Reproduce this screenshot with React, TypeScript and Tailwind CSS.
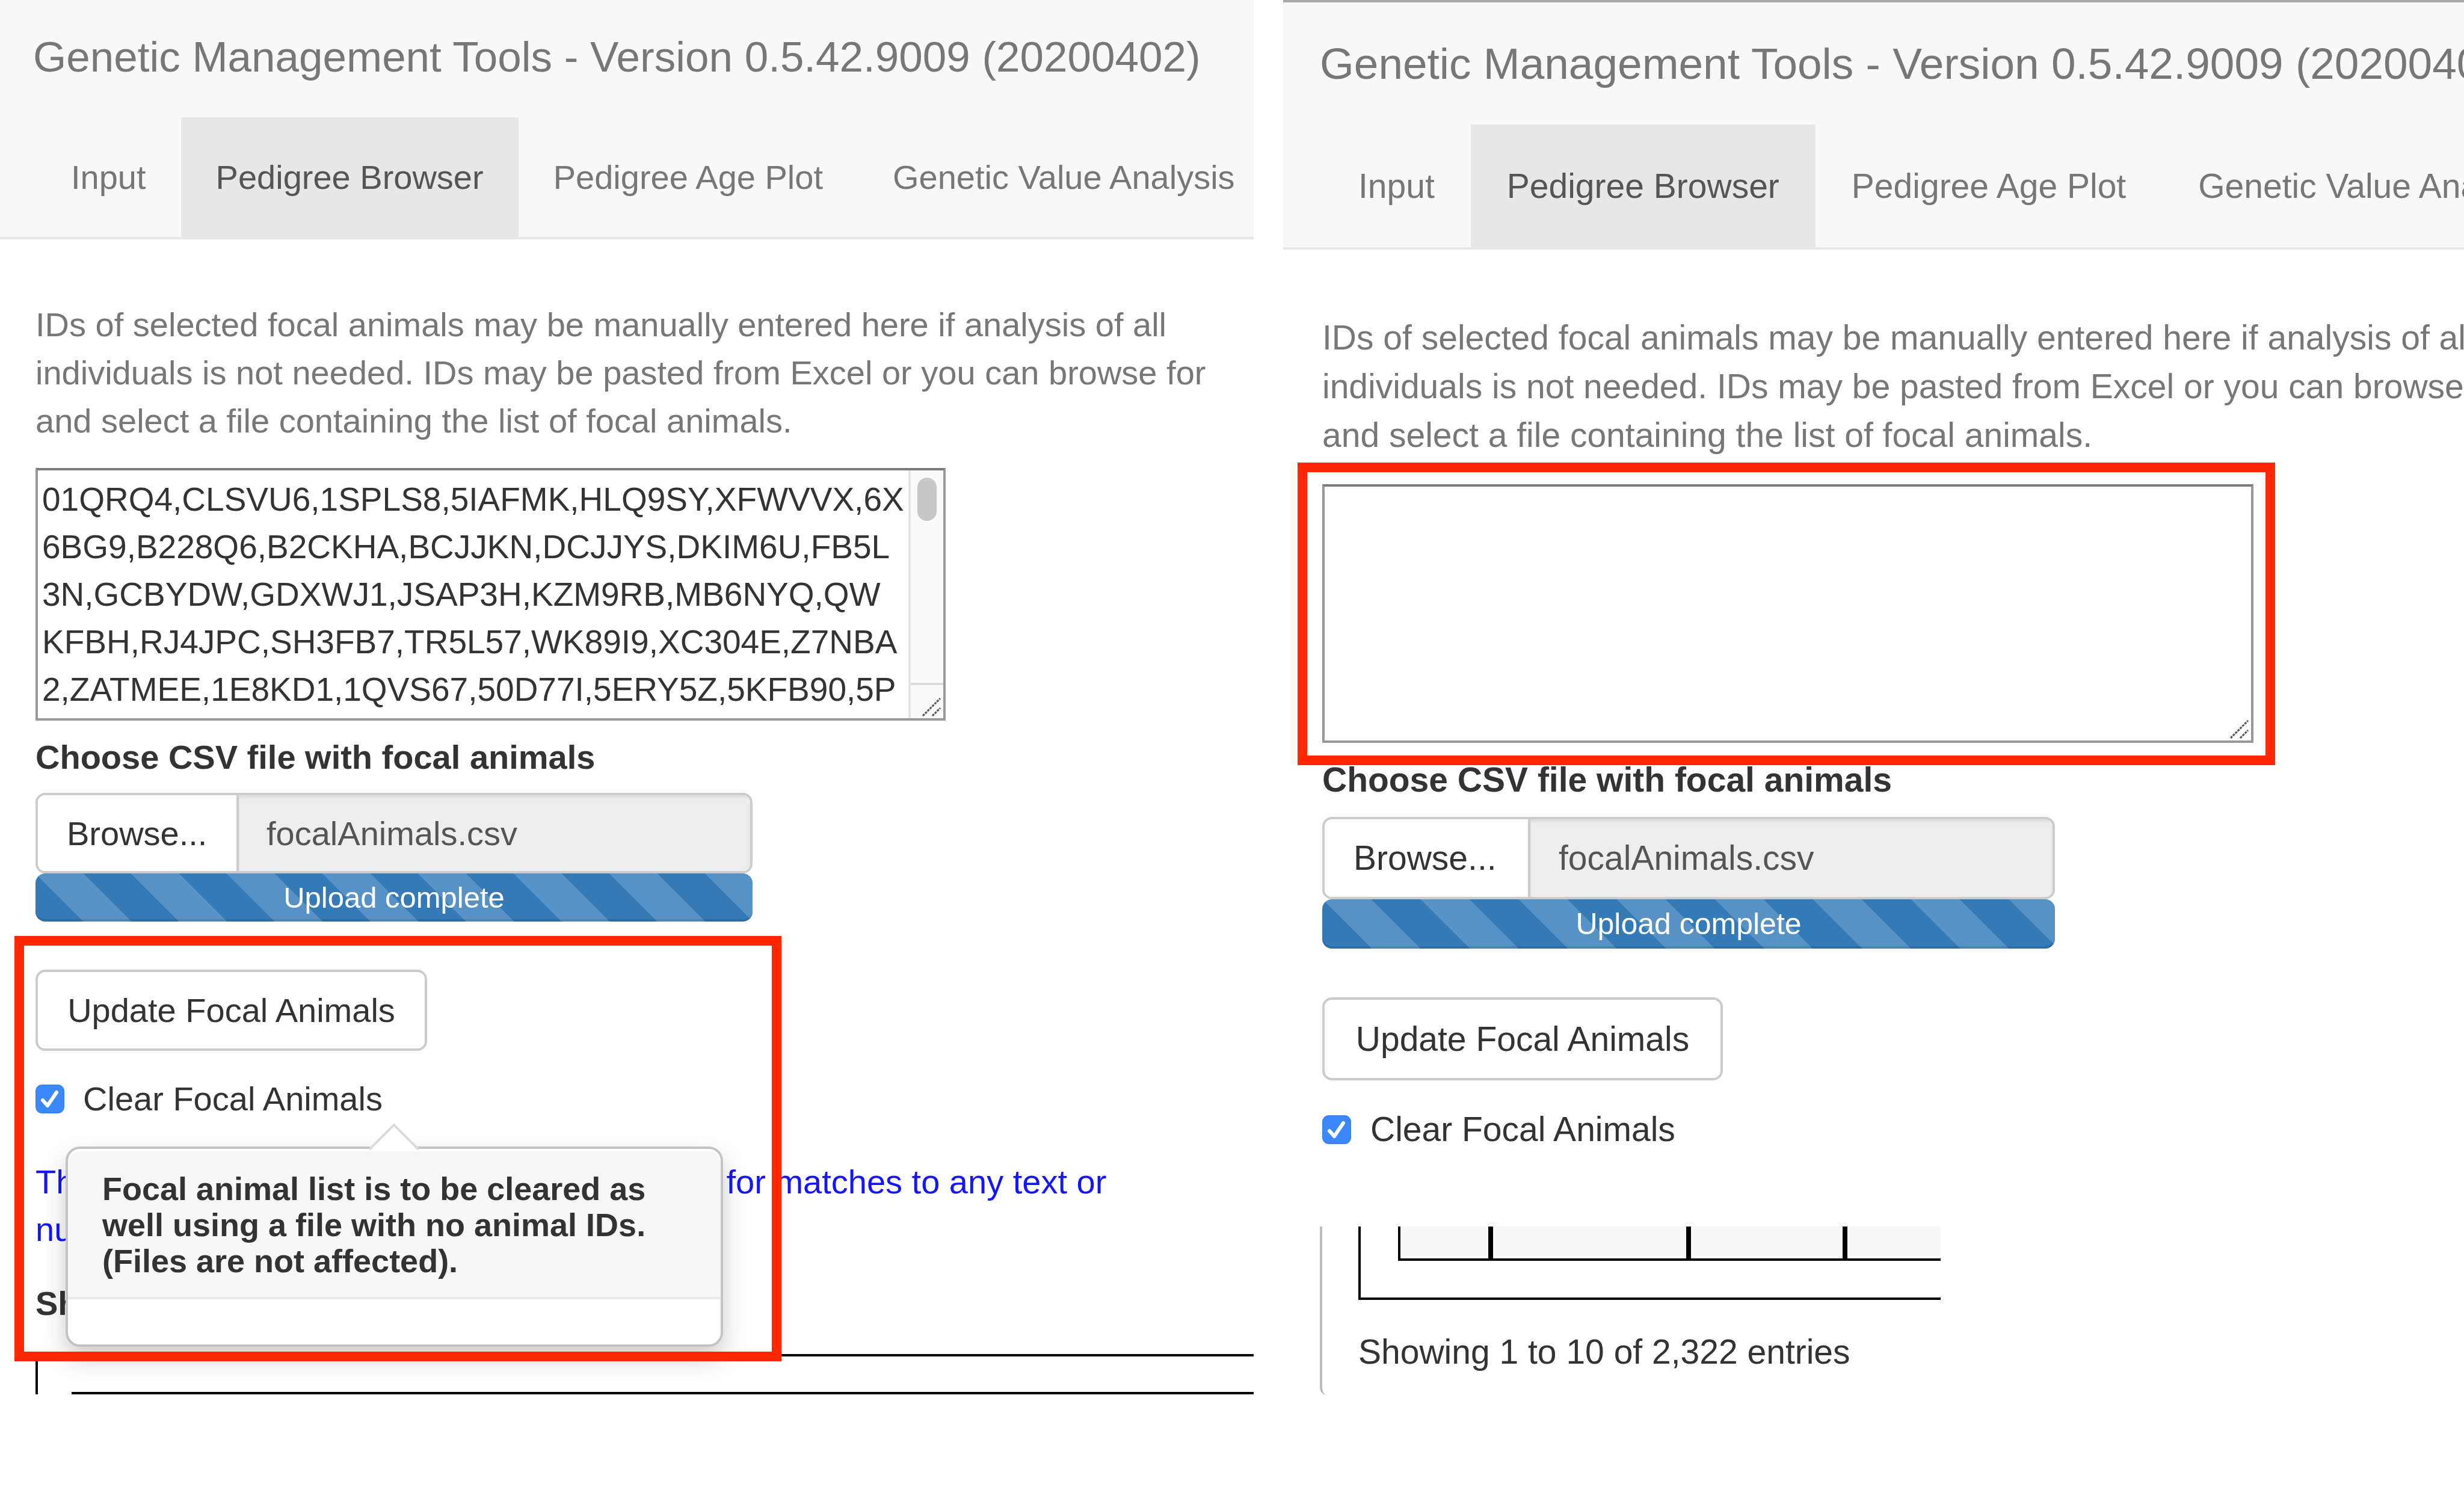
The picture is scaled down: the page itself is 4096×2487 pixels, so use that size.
import { useState } from "react";

const FOCAL_IDS = [
  "01QRQ4,CLSVU6,1SPLS8,5IAFMK,HLQ9SY,XFWVVX,6X",
  "6BG9,B228Q6,B2CKHA,BCJJKN,DCJJYS,DKIM6U,FB5L",
  "3N,GCBYDW,GDXWJ1,JSAP3H,KZM9RB,MB6NYQ,QW",
  "KFBH,RJ4JPC,SH3FB7,TR5L57,WK89I9,XC304E,Z7NBA",
  "2,ZATMEE,1E8KD1,1QVS67,50D77I,5ERY5Z,5KFB90,5P",
].join("\n");

const TABS = ["Input", "Pedigree Browser", "Pedigree Age Plot", "Genetic Value Analysis"];

const normal = {
  header: "bg-[#f8f8f8] border-b-4 border-[#e7e7e7]",
  brand: "pl-[55px] pt-[55px] pb-[60px] text-[71px] leading-[80px]",
  nav: "pl-[60px]",
  tab: "px-[58px] py-[60px] text-[56px] leading-[79px]",
  body: "pl-[59px] text-[56px] leading-[79px]",
  help: "pt-[102px] leading-[80px]",
  areaBox: "mt-[38px] w-[1513px] h-[420px]",
  label: "mt-[21px]",
  group: "mt-[20px] w-[1192px] h-[134px]",
  browse: "w-[334px] pl-[48px]",
  fileName: "pl-[46px]",
  progress: "w-[1192px] h-[80px] leading-[80px] text-[49px] bg-[length:159px_159px]",
  button: "mt-[80px] w-[651px] h-[135px]",
  check: "mt-[40px] gap-[31px]",
};

const large: typeof normal = {
  header: "bg-[#f8f8f8] border-t-4 border-b-4 border-t-[#a9a9a9] border-b-[#e7e7e7]",
  brand: "pl-[61px] pt-[61px] pb-[61px] text-[73px] leading-[81px]",
  nav: "pl-[65px]",
  tab: "px-[60px] py-[61px] text-[57px] leading-[82px]",
  body: "pl-[65px] text-[57px] leading-[81px]",
  help: "pt-[106px] leading-[81px]",
  areaBox: "mt-[41px] w-[1548px] h-[430px]",
  label: "mt-[21px]",
  group: "mt-[21px] w-[1218px] h-[137px]",
  browse: "w-[342px] pl-[48px]",
  fileName: "pl-[47px]",
  progress: "w-[1218px] h-[82px] leading-[82px] text-[50px] bg-[length:163px_163px]",
  button: "mt-[81px] w-[666px] h-[138px]",
  check: "mt-[41px] gap-[32px]",
};

type Size = typeof normal;

function Header({ s }: { s: Size }) {
  return (
    <header className={s.header}>
      <div className={`${s.brand} text-[#777]`}>Genetic Management Tools - Version 0.5.42.9009 (20200402)</div>
      <nav className={`${s.nav} flex`}>
        {TABS.map((t) => (
          <a
            key={t}
            href="#"
            className={`${s.tab} shrink-0 ${t === "Pedigree Browser" ? "bg-[#e7e7e7] text-[#555]" : "text-[#777]"}`}
          >
            {t}
          </a>
        ))}
      </nav>
    </header>
  );
}

function Grip() {
  return (
    <svg className="absolute right-[3px] bottom-[3px] size-[32px]" viewBox="0 0 32 32" aria-hidden="true">
      <path d="M1 31 L30 2 M17 31 L30 18" stroke="#555" strokeWidth="3" strokeDasharray="4 1.5" fill="none" />
    </svg>
  );
}

function IdArea({ s, id, value, scroll }: { s: Size; id: string; value: string; scroll: boolean }) {
  return (
    <div
      className={`${s.areaBox} relative border-4 border-[#999] border-t-[#7b7b7b] bg-white`}
    >
      <textarea
        id={id}
        aria-label="Focal animal IDs"
        defaultValue={value}
        className="block size-full resize-none overflow-hidden whitespace-pre pt-[9px] pl-[7px] text-[55px] text-[#333] outline-none"
      />
      {scroll && (
        <div className="absolute inset-y-0 right-0 flex w-[58px] flex-col border-l-4 border-[#e6e6e6] bg-[#fafafa]">
          <div className="grow pt-[12px] pl-[11px]">
            <div className="h-[72px] w-[32px] rounded-full bg-[#c8c8c8]" />
          </div>
          <div className="h-[59px] border-t-4 border-[#dcdcdc]" />
        </div>
      )}
      <Grip />
    </div>
  );
}

function FileUpload({ s, id }: { s: Size; id: string }) {
  return (
    <>
      <label htmlFor={id} className={`${s.label} block font-bold`}>
        Choose CSV file with focal animals
      </label>
      <div className={`${s.group} flex overflow-hidden rounded-[16px] border-4 border-[#ccc]`}>
        <button type="button" className={`${s.browse} shrink-0 border-r-4 border-[#ccc] bg-white text-left`}>
          Browse...
        </button>
        <input
          id={id}
          readOnly
          value="focalAnimals.csv"
          className={`${s.fileName} min-w-0 grow bg-[#eee] text-[#555] shadow-[inset_0_4px_4px_rgba(0,0,0,0.075)] outline-none`}
        />
      </div>
      <div
        role="progressbar"
        aria-valuenow={100}
        className={`${s.progress} rounded-[16px] bg-[#337ab7] bg-[linear-gradient(45deg,rgba(255,255,255,0.18)_25%,transparent_25%,transparent_50%,rgba(255,255,255,0.18)_50%,rgba(255,255,255,0.18)_75%,transparent_75%)] text-center text-white shadow-[inset_0_-4px_0_rgba(0,0,0,0.1)]`}
      >
        Upload complete
      </div>
    </>
  );
}

function ClearCheck({ s, id }: { s: Size; id: string }) {
  const [on, setOn] = useState(true);
  return (
    <div className={`${s.check} flex items-center`}>
      <span className="relative block size-[48px]">
        <input
          id={id}
          type="checkbox"
          checked={on}
          onChange={(e) => setOn(e.target.checked)}
          className="block size-[48px] appearance-none rounded-[11px] border-2 border-gray-400 bg-white checked:border-[#3584f9] checked:bg-[#3b88fd]"
        />
        {on && (
          <svg className="pointer-events-none absolute inset-0 size-[48px]" viewBox="0 0 48 48" aria-hidden="true">
            <path d="M12 26 L20 35 L35 13" fill="none" stroke="#fff" strokeWidth="6" strokeLinecap="round" strokeLinejoin="round" />
          </svg>
        )}
      </span>
      <label htmlFor={id}>Clear Focal Animals</label>
    </div>
  );
}

function UpdateButton({ s }: { s: Size }) {
  return (
    <button type="button" className={`${s.button} block rounded-[16px] border-4 border-[#ccc] bg-white`}>
      Update Focal Animals
    </button>
  );
}

function HelpText({ s }: { s: Size }) {
  return (
    <p className={`${s.help} text-[#777]`}>
      IDs of selected focal animals may be manually entered here if analysis of all
      <br />
      individuals is not needed. IDs may be pasted from Excel or you can browse for
      <br />
      and select a file containing the list of focal animals.
    </p>
  );
}

function Popover() {
  return (
    <div
      role="tooltip"
      className="absolute top-[294px] left-[50px] z-10 w-[1093px] rounded-[24px] border-4 border-[#c4c4c4] bg-white shadow-[0_20px_40px_rgba(0,0,0,0.2)]"
    >
      <svg className="absolute -top-[44px] left-[498px] h-[48px] w-[88px]" viewBox="0 0 88 48" aria-hidden="true">
        <path d="M3 48 L44 6 L85 48 Z" fill="#fff" />
        <path d="M3 45 L44 4 L85 45" fill="none" stroke="#dcdcdc" strokeWidth="4" />
      </svg>
      <h3 className="mt-[4px] rounded-t-[20px] border-b-4 border-[#ebebeb] bg-[#f7f7f7] px-[57px] pt-[32px] pb-[30px] text-[54px] leading-[60px] font-bold">
        Focal animal list is to be cleared as
        <br />
        well using a file with no animal IDs.
        <br />
        (Files are not affected).
      </h3>
      <div className="h-[75px]" />
    </div>
  );
}

function LeftPanel() {
  const s = normal;
  return (
    <section className="overflow-hidden">
      <Header s={s} />
      <div className={s.body}>
        <HelpText s={s} />
        <IdArea s={s} id="ids-before" value={FOCAL_IDS} scroll />
        <FileUpload s={s} id="file-before" />
        <div className="relative">
          <UpdateButton s={s} />
          <ClearCheck s={s} id="clear-before" />
          <p className="mt-[59px] text-[#1414ff]">
            The search field below will search all columns for matches to any text or
            <br />
            numbers entered.
          </p>
          <div className="mt-[44px] font-bold">Show</div>
          <Popover />
          <div className="pointer-events-none absolute -top-[56px] -bottom-[57px] -left-[35px] z-20 w-[1275px] border-[16px] border-[#ff2600]" />
        </div>
        <div className="mt-[45px] flex h-[67px] flex-col justify-end border-t-4 border-l-4 border-black pl-[56px]">
          <div className="border-t-4 border-black" />
        </div>
      </div>
    </section>
  );
}

function RightPanel() {
  const s = large;
  return (
    <section className="overflow-hidden">
      <Header s={s} />
      <div className={s.body}>
        <HelpText s={s} />
        <div className="relative w-fit">
          <IdArea s={s} id="ids-after" value="" scroll={false} />
          <div className="pointer-events-none absolute -top-[36px] -right-[36px] -bottom-[37px] -left-[41px] z-20 border-[16px] border-[#ff2600]" />
        </div>
        <FileUpload s={s} id="file-after" />
        <UpdateButton s={s} />
        <ClearCheck s={s} id="clear-after" />
      </div>
      <div className="mt-[121px] ml-[61px] w-fit rounded-bl-[12px] border-l-4 border-[#bdbdbd] pb-[11px] pl-[60px] text-[#333]">
        <div className="border-b-4 border-l-4 border-black pb-[61px] pl-[62px]">
          <div className="flex h-[57px] w-[902px] border-b-4 border-l-4 border-black bg-[#f7f7f7]">
            <div className="w-[154px] border-r-8 border-black" />
            <div className="w-[329px] border-r-8 border-black" />
            <div className="w-[260px] border-r-8 border-black" />
          </div>
        </div>
        <p className="pt-[46px] pb-[20px] text-[57px] leading-[81px]">Showing 1 to 10 of 2,322 entries</p>
      </div>
    </section>
  );
}

export default function App() {
  return (
    <main className="grid min-h-screen grid-cols-[minmax(0,2084fr)_minmax(0,1963fr)] content-start gap-x-[49px] overflow-hidden bg-white font-['Liberation_Sans',Arial,sans-serif] whitespace-nowrap text-[#333]">
      <LeftPanel />
      <RightPanel />
    </main>
  );
}
